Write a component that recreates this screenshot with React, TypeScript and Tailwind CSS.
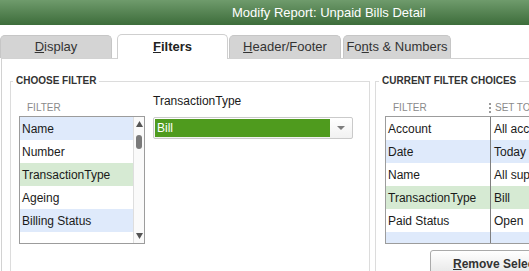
import React from 'react';

type Row = { label: string; bg: string };

const filterRows: Row[] = [
  { label: 'Name', bg: 'bg-[#dfeafb]' },
  { label: 'Number', bg: 'bg-white' },
  { label: 'TransactionType', bg: 'bg-[#d6ead3]' },
  { label: 'Ageing', bg: 'bg-white' },
  { label: 'Billing Status', bg: 'bg-[#dfeafb]' },
];

const choiceRows: { filter: string; value: string; bg: string }[] = [
  { filter: 'Account', value: 'All accounts payable', bg: 'bg-white' },
  { filter: 'Date', value: 'Today', bg: 'bg-[#dfeafb]' },
  { filter: 'Name', value: 'All suppliers', bg: 'bg-white' },
  { filter: 'TransactionType', value: 'Bill', bg: 'bg-[#d6ead3]' },
  { filter: 'Paid Status', value: 'Open', bg: 'bg-white' },
];

const Tab: React.FC<{ before?: string; hot: string; after: string; active?: boolean; width: string; className?: string }> = ({
  before = '',
  hot,
  after,
  active,
  width,
  className = '',
}) => (
  <div
    className={`${width} ${className} shrink-0 flex items-center justify-center rounded-t-[5px] border border-b-0 text-[13px] ${
      active
        ? 'h-[25px] bg-white border-[#cfcfcf] font-bold text-[#222] relative z-10 -mb-px'
        : 'h-[23px] bg-[#d4d4d4] border-[#c6c6c6] text-[#333]'
    }`}
  >
    <span>
      {before}
      <u>{hot}</u>
      {after}
    </span>
  </div>
);

export default function App() {
  return (
    <div className="w-[529px] h-[271px] overflow-hidden bg-white font-['Liberation_Sans',Arial,sans-serif]">
      {/* title bar */}
      <div className="h-[25px] flex items-center pl-[232px] bg-gradient-to-b from-[#6f9b6c] to-[#3d6d3b] text-white text-[13px]">
        Modify Report: Unpaid Bills Detail
      </div>

      {/* tabs */}
      <div className="h-[33px] flex items-end">
        <Tab hot="D" after="isplay" width="w-[112px]" />
        <Tab hot="F" after="ilters" width="w-[111px]" className="ml-[5px]" active />
        <Tab hot="H" after="eader/Footer" width="w-[112px]" className="ml-[1px]" />
        <Tab before="Fo" hot="n" after="ts & Numbers" width="w-[108px]" className="ml-[2px]" />
      </div>

      {/* content */}
      <div className="ml-px border-t border-l border-[#d2d2d2] flex pl-[8px] h-[300px]">
        <fieldset className="mt-[16px] w-[360px] shrink-0 border border-[#dcdcdc] self-start h-[260px]">
          <legend className="ml-[2px] px-[3px] text-[10px] leading-[12px] font-bold text-[#333]">CHOOSE FILTER</legend>
          <div className="flex pl-[8px]">
            <div className="flex flex-col">
              <div className="mt-[15px] mb-[2px] pl-[8px] text-[10px] leading-[12px] text-[#8a8a8a]">FILTER</div>
              <div className="w-[126px] h-[128px] border border-[#9c9c9c] flex">
                <div className="flex-1 flex flex-col">
                  {filterRows.map((r) => (
                    <div key={r.label} className={`h-[23px] ${r.bg} flex items-center pl-[2px] text-[12px] text-[#1a1a1a]`}>
                      {r.label}
                    </div>
                  ))}
                </div>
                <div className="w-[11px] border-l border-[#dedede] bg-[#fafafa] flex flex-col items-center justify-between py-[4px]">
                  <div className="flex flex-col items-center gap-[8px]">
                    <svg width="7" height="6" viewBox="0 0 7 6">
                      <path d="M3.5 0 L7 6 L0 6 Z" fill="#555" />
                    </svg>
                    <div className="w-[6px] h-[14px] rounded-[3px] bg-[#7a7a7a]" />
                  </div>
                  <svg width="7" height="6" viewBox="0 0 7 6">
                    <path d="M0 0 L7 0 L3.5 6 Z" fill="#555" />
                  </svg>
                </div>
              </div>
            </div>
            <div className="ml-[8px] flex flex-col">
              <div className="mt-[7px] mb-[8px] text-[12px] leading-[15px] text-[#1a1a1a]">TransactionType</div>
              <div className="w-[200px] h-[22px] border border-[#cacaca] rounded-[2px] p-[1px] flex items-stretch bg-gradient-to-b from-white to-[#f1f1f1]">
                <div className="w-[175px] bg-[#4f9b1e] text-white text-[12px] pl-[2px] flex items-center">Bill</div>
                <div className="flex-1 flex items-center justify-center">
                  <svg width="8" height="4" viewBox="0 0 8 4">
                    <path d="M0 0 L8 0 L4 4 Z" fill="#7d7d7d" />
                  </svg>
                </div>
              </div>
            </div>
          </div>
        </fieldset>

        <fieldset className="ml-[5px] mt-[16px] w-[200px] shrink-0 border border-[#dcdcdc] self-start h-[260px]">
          <legend className="ml-[3px] px-[3px] text-[10px] leading-[12px] font-bold text-[#333] whitespace-nowrap">
            CURRENT FILTER CHOICES
          </legend>
          <div className="pl-[9px] flex flex-col">
            <div className="mt-[15px] mb-[2px] flex text-[10px] leading-[12px] text-[#8a8a8a]">
              <div className="w-[104px] pl-[8px]">FILTER</div>
              <div className="flex items-center whitespace-nowrap">
                <span className="flex flex-col gap-[2px] mr-[4px]">
                  <span className="w-[2px] h-[2px] bg-[#999]" />
                  <span className="w-[2px] h-[2px] bg-[#999]" />
                  <span className="w-[2px] h-[2px] bg-[#999]" />
                </span>
                SET TO
              </div>
            </div>
            <div className="w-[220px] h-[128px] border border-[#9c9c9c] flex flex-col">
              {choiceRows.map((r) => (
                <div key={r.filter} className={`h-[23px] ${r.bg} flex text-[12px] text-[#1a1a1a]`}>
                  <div className="w-[105px] border-r border-[#7f7f7f] pl-[2px] flex items-center">{r.filter}</div>
                  <div className="pl-[3px] flex items-center whitespace-nowrap">{r.value}</div>
                </div>
              ))}
              <div className="flex-1 bg-[#dfeafb] flex">
                <div className="w-[105px] border-r border-[#7f7f7f]" />
              </div>
            </div>
            <div className="mt-[6px] ml-[45px] h-[28px] w-[170px] pl-[22px] rounded-[3px] border border-[#aaaaaa] bg-gradient-to-b from-white to-[#e4e4e4] flex items-center text-[12px] font-bold text-[#333] whitespace-nowrap">
              <span>
                <u>R</u>emove Selected Filter
              </span>
            </div>
          </div>
        </fieldset>
      </div>
    </div>
  );
}
